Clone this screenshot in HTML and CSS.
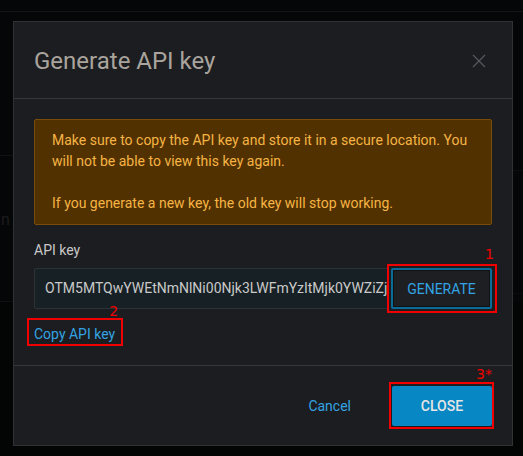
FILE: index.html
```html
<!DOCTYPE html>
<html>
<head>
<meta charset="utf-8">
<link rel="stylesheet" href="styles.css">
</head>
<body>
<div class="backdrop">
  <div class="ghost-text">in</div>
  <div class="modal">
    <div class="modal-header">
      <h2 class="modal-title">Generate API key</h2>
      <button class="close-btn" aria-label="Close">
        <svg width="14" height="14" viewBox="0 0 14 14"><path d="M1 1L13 13M13 1L1 13" stroke="#55595d" stroke-width="1.2" fill="none"/></svg>
      </button>
    </div>
    <div class="modal-body">
      <div class="alert">
        <p>Make sure to copy the API key and store it in a secure location. You will not be able to view this key again.</p>
        <p>If you generate a new key, the old key will stop working.</p>
      </div>
      <div class="field-label">API key</div>
      <div class="key-row">
        <div class="key-input">OTM5MTQwYWEtNmNlNi00Njk3LWFmYzItMjk0YWZiZjE0</div>
        <div class="annot">
          <button class="btn-generate">GENERATE</button>
          <span class="annot-box box-gen"></span>
          <span class="annot-num num-gen">1</span>
        </div>
      </div>
      <div class="copy-row">
        <div class="annot">
          <a class="copy-link">Copy API key</a>
          <span class="annot-box box-copy"></span>
          <span class="annot-num num-copy">2</span>
        </div>
      </div>
    </div>
    <div class="modal-footer">
      <button class="btn-cancel">Cancel</button>
      <div class="annot">
        <button class="btn-close">CLOSE</button>
        <span class="annot-box box-close"></span>
        <span class="annot-num num-close">3*</span>
      </div>
    </div>
  </div>
</div>
</body>
</html>
```
FILE: styles.css
```css
* { box-sizing: border-box; }
html, body { margin: 0; padding: 0; }
body {
  width: 523px;
  height: 456px;
  overflow: hidden;
  background-color: #050607;
  background-image:
    linear-gradient(#131517, #131517),
    linear-gradient(#101214, #101214),
    linear-gradient(#0e1012, #0e1012),
    linear-gradient(#0c0e10, #0c0e10),
    linear-gradient(#0b0c0e, #0b0c0e),
    linear-gradient(#030404, #030404);
  background-size: 100% 1px, 13px 1px, 13px 1px, 11px 1px, 11px 1px, 100% 160px;
  background-position: 0 11px, 0 155px, 0 301px, 512px 170px, 512px 293px, 0 302px;
  background-repeat: no-repeat;
  font-family: Roboto, "Liberation Sans", sans-serif;
}
.backdrop {
  position: relative;
  padding: 21px 0 0 13px;
}
.ghost-text {
  position: absolute;
  left: -3px;
  top: 210px;
  font-size: 16px;
  color: #1b1c1e;
}
.modal {
  position: relative;
  width: 500px;
  height: 425px;
  background: #1c1d20;
  border: 1px solid #303134;
  display: flex;
  flex-direction: column;
}
.modal-header {
  height: 77px;
  border-bottom: 1px solid #36373a;
  display: flex;
  align-items: center;
  justify-content: space-between;
  padding: 0 20px 0 20px;
}
.modal-title {
  margin: 0;
  font-size: 24px;
  font-weight: 400;
  color: #a9a49d;
  line-height: 30px;
  padding-top: 2px;
}
.close-btn {
  background: none;
  border: 0;
  padding: 0;
  width: 14px;
  height: 14px;
  margin-right: 6px;
  margin-top: 2px;
  display: flex;
}
.modal-body {
  padding: 20px 20px 0 20px;
  height: 266px;
}
.alert {
  background: #523100;
  border: 1px solid #7a4b09;
  border-radius: 2px;
  padding: 10px 17px;
  color: #f5b445;
  font-size: 14px;
  line-height: 21px;
}
.alert p { margin: 0; }
.alert p + p { margin-top: 21px; }
.field-label {
  margin-top: 15px;
  font-size: 14px;
  line-height: 21px;
  color: #c8c8c8;
}
.key-row {
  margin-top: 7px;
  display: flex;
  gap: 2px;
  height: 41px;
}
.key-input {
  flex: 1;
  min-width: 0;
  background: #172024;
  border: 1px solid #2c3337;
  border-radius: 2px;
  color: #c9c9c9;
  font-size: 14px;
  line-height: 39px;
  padding: 0 6px 0 10px;
  white-space: nowrap;
  overflow: hidden;
}
.annot { position: relative; display: flex; }
.btn-generate {
  width: 101px;
  height: 41px;
  background: #1e1f22;
  border: 2px solid #0b6b98;
  box-shadow: inset 0 0 0 1px #111214;
  border-radius: 2px;
  color: #33a3e3;
  font-family: Roboto, "Liberation Sans", sans-serif;
  font-size: 14px;
  padding: 0;
}
.annot-box {
  position: absolute;
  border: 2px solid #f00000;
  pointer-events: none;
}
.annot-num {
  position: absolute;
  color: #f00000;
  font-family: "DejaVu Sans", sans-serif;
  font-size: 14px;
  line-height: 14px;
}
.box-gen { left: -4px; top: -4px; right: -5px; bottom: -4px; }
.num-gen { right: -2px; top: -21px; }
.copy-row {
  margin-top: 15px;
  display: flex;
}
.copy-link {
  color: #33a3e3;
  font-size: 14px;
  line-height: 20px;
  cursor: pointer;
}
.box-copy { left: -7px; top: -6px; right: -8px; bottom: -2px; }
.num-copy { right: -3px; top: -20px; }
.modal-footer {
  border-top: 1px solid #36373a;
  flex: 1;
  display: flex;
  justify-content: flex-end;
  align-items: center;
  padding: 0 20px 0 0;
}
.btn-cancel {
  background: none;
  border: 0;
  color: #33a3e3;
  font-family: Roboto, "Liberation Sans", sans-serif;
  font-size: 14px;
  padding: 0 20px;
  margin-right: 21px;
}
.btn-close {
  width: 100px;
  height: 40px;
  background: #0788c4;
  border: 0;
  border-radius: 2px;
  color: #e6e6e6;
  font-family: Roboto, "Liberation Sans", sans-serif;
  font-size: 14px;
  font-weight: 500;
  padding: 0;
}
.box-close { left: -3px; top: -4px; right: -2px; bottom: -3px; }
.num-close { right: 0px; top: -19px; }
```
